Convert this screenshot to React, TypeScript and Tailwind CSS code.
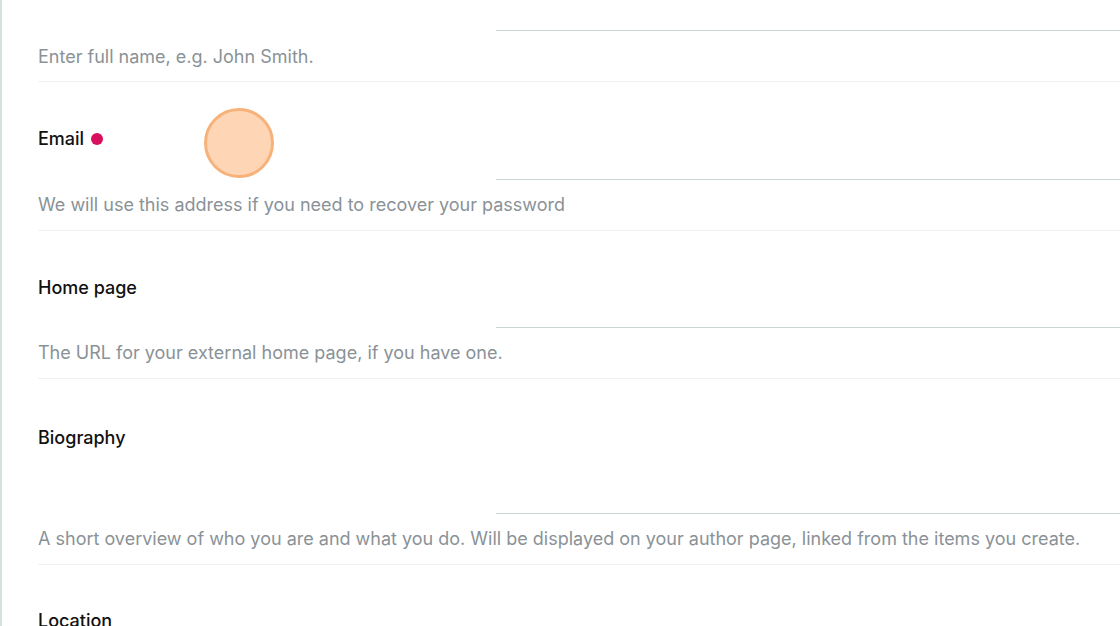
const fields = [
  { label: "", help: "Enter full name, e.g. John Smith.", inputH: "h-[31px]", labelMt: "", helpMt: "mt-[14px]", helpPb: "pb-[12px]" },
  { label: "Email", required: true, help: "We will use this address if you need to recover your password", inputH: "h-[98px]", labelMt: "mt-[45px]", helpMt: "mt-[13px]", helpPb: "pb-[13px]" },
  { label: "Home page", help: "The URL for your external home page, if you have one.", inputH: "h-[97px]", labelMt: "mt-[45px]", helpMt: "mt-[13px]", helpPb: "pb-[13px]" },
  {
    label: "Biography",
    help: "A short overview of who you are and what you do. Will be displayed on your author page, linked from the items you create.",
    inputH: "h-[135px]",
    labelMt: "mt-[47px]",
    helpMt: "mt-[13px]",
    helpPb: "pb-[13px]",
  },
];

export default function App() {
  return (
    <div
      className="relative h-[626px] w-[1120px] overflow-hidden bg-white"
      style={{ fontFamily: "Inter, 'Noto Sans', sans-serif" }}
    >
      <div className="h-full border-l-2 border-[#d5e0e1] pl-[36px]">
        {fields.map((f, i) => (
          <section key={i} className="border-b border-[#eef2f2]">
            <div className="flex items-start">
              <div className={`w-[458px] shrink-0 ${f.labelMt}`}>
                {f.label && (
                  <span className="flex items-center gap-[7px] text-[18px] font-medium leading-6 text-[#111]">
                    {f.label}
                    {f.required && <span className="h-3 w-3 rounded-full bg-[#d90f5c]" />}
                  </span>
                )}
              </div>
              <div className={`flex-1 border-b border-[#c9d6d6] ${f.inputH}`} />
            </div>
            <p className={`${f.helpMt} ${f.helpPb} text-[18px] leading-6 text-[#8a9297]`}>{f.help}</p>
          </section>
        ))}
        <div className="mt-[44px] text-[18px] font-medium leading-6 text-[#111]">Location</div>
      </div>
      <div className="absolute left-[204px] top-[108px] h-[70px] w-[70px] rounded-full border-[3px] border-[#f6b27a] bg-[#fed5b5]" />
    </div>
  );
}
